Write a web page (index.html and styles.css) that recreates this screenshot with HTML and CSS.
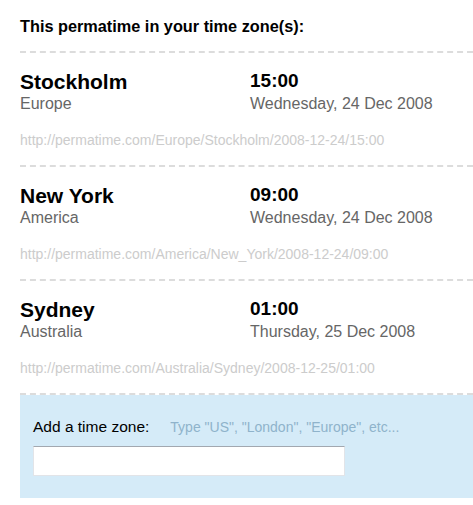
FILE: index.html
```html
<!DOCTYPE html>
<html lang="en">
<head>
<meta charset="utf-8">
<title>Permatime</title>
<link rel="stylesheet" href="styles.css">
</head>
<body>
<div class="page">
  <h2 class="title">This permatime in your time zone(s):</h2>
  <ul class="zones">
    <li class="zone">
      <div class="row">
        <div class="place">
          <div class="city">Stockholm</div>
          <div class="region">Europe</div>
        </div>
        <div class="when">
          <div class="time">15:00</div>
          <div class="date">Wednesday, 24 Dec 2008</div>
        </div>
      </div>
      <div class="url">http://permatime.com/Europe/Stockholm/2008-12-24/15:00</div>
    </li>
    <li class="zone">
      <div class="row">
        <div class="place">
          <div class="city">New York</div>
          <div class="region">America</div>
        </div>
        <div class="when">
          <div class="time">09:00</div>
          <div class="date">Wednesday, 24 Dec 2008</div>
        </div>
      </div>
      <div class="url">http://permatime.com/America/New_York/2008-12-24/09:00</div>
    </li>
    <li class="zone">
      <div class="row">
        <div class="place">
          <div class="city">Sydney</div>
          <div class="region">Australia</div>
        </div>
        <div class="when">
          <div class="time">01:00</div>
          <div class="date">Thursday, 25 Dec 2008</div>
        </div>
      </div>
      <div class="url">http://permatime.com/Australia/Sydney/2008-12-25/01:00</div>
    </li>
  </ul>
  <div class="add">
    <div class="add-head">
      <label class="add-label" for="tz">Add a time zone:</label>
      <span class="add-hint">Type "US", "London", "Europe", etc...</span>
    </div>
    <input class="add-input" id="tz" type="text">
  </div>
</div>
</body>
</html>
```

FILE: styles.css
```css
html, body {
  margin: 0;
  padding: 0;
  background: #fff;
}
body {
  font-family: "Liberation Sans", Arial, sans-serif;
  color: #000;
}
.page {
  margin-left: 20px;
}
.title {
  margin: 0;
  padding-top: 16px;
  font-size: 16.3px;
  line-height: 20px;
  font-weight: bold;
  height: 35px;
  border-bottom: 2px dashed #dcdcdc;
}
.zones {
  list-style: none;
  margin: 0;
  padding: 0;
}
.zone {
  padding: 17px 0 16px;
  border-bottom: 2px dashed #dcdcdc;
}
.row {
  display: grid;
  grid-template-columns: 230px 1fr;
}
.city {
  font-size: 21px;
  line-height: 24px;
  font-weight: bold;
}
.region {
  font-size: 16px;
  line-height: 20px;
  color: #666;
}
.time {
  font-size: 19px;
  line-height: 22px;
  font-weight: bold;
}
.date {
  margin-top: 2px;
  font-size: 16px;
  line-height: 20px;
  color: #666;
}
.url {
  margin-top: 17px;
  font-size: 14px;
  line-height: 18px;
  color: #ccc;
}
.add {
  background: #d5ebf8;
  padding: 22px 13px 22px;
}
.add-head {
  display: flex;
  align-items: baseline;
  gap: 21px;
  line-height: 20px;
  white-space: nowrap;
}
.add-label {
  font-size: 15.5px;
  color: #000;
}
.add-hint {
  font-size: 14px;
  color: #8fb3cb;
}
.add-input {
  display: block;
  margin: 9px 0 0;
  width: 312px;
  height: 30px;
  box-sizing: border-box;
  border: 1px solid #e2e4e8;
  border-top-color: #a2a8b0;
  background: #fff;
  padding: 0 4px;
  font-family: "Liberation Sans", Arial, sans-serif;
  font-size: 14px;
  outline: none;
}
```
